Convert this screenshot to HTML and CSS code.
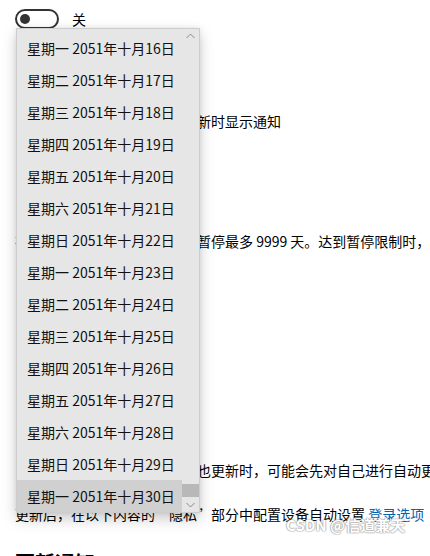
FILE: index.html
```html
<!DOCTYPE html>
<html lang="zh-CN">
<head>
    <meta charset="UTF-8">
    <meta name="viewport" content="width=device-width, initial-scale=1.0">
    <title>更新设置</title>
    <link rel="stylesheet" href="styles.css">
</head>
<body>
    <div class="page">
        <div class="toggle-row">
            <span class="toggle"><span class="knob"></span></span>
            <span>关</span>
        </div>

        <p class="line line-notify">当电脑需要重新启动以完成更新时显示通知</p>
        <p class="line line-pause">在此设备上暂停安装更新。可暂停最多 9999 天。达到暂停限制时，需要先获取新的更新</p>
        <p class="line line-other">当更新服务在为其他产品同时也更新时，可能会先对自己进行自动更新</p>
        <p class="line line-privacy">更新后，在以下内容的“隐私”部分中配置设备自动设置 <a href="#">登录选项</a></p>
        <h2 class="heading">更新通知</h2>
    </div>

    <div class="dropdown">
        <ul class="items">
            <li>星期一 2051年十月16日</li>
            <li>星期二 2051年十月17日</li>
            <li>星期三 2051年十月18日</li>
            <li>星期四 2051年十月19日</li>
            <li>星期五 2051年十月20日</li>
            <li>星期六 2051年十月21日</li>
            <li>星期日 2051年十月22日</li>
            <li>星期一 2051年十月23日</li>
            <li>星期二 2051年十月24日</li>
            <li>星期三 2051年十月25日</li>
            <li>星期四 2051年十月26日</li>
            <li>星期五 2051年十月27日</li>
            <li>星期六 2051年十月28日</li>
            <li>星期日 2051年十月29日</li>
            <li class="selected">星期一 2051年十月30日</li>
        </ul>
        <div class="scrollbar">
            <span class="arrow">
                <svg width="9" height="6" viewBox="0 0 9 6"><polyline points="0.5,5 4.5,1 8.5,5" fill="none" stroke="#8a8a8a" stroke-width="1"/></svg>
            </span>
            <span class="track"></span>
            <span class="thumb"></span>
            <span class="arrow">
                <svg width="9" height="6" viewBox="0 0 9 6"><polyline points="0.5,1 4.5,5 8.5,1" fill="none" stroke="#8a8a8a" stroke-width="1"/></svg>
            </span>
        </div>
    </div>

    <div class="watermark">CSDN @信道兼天</div>
</body>
</html>
```

FILE: styles.css
```css
body {
    margin: 0;
    width: 430px;
    height: 556px;
    overflow: hidden;
    background: #fff;
    color: #000;
    font-family: "Noto Sans CJK SC", "Microsoft YaHei", sans-serif;
    font-size: 14px;
    position: relative;
}

.page {
    padding-left: 15px;
    white-space: nowrap;
}

.toggle-row {
    display: flex;
    align-items: center;
    gap: 13px;
    height: 20px;
    margin-top: 9px;
    line-height: 20px;
}

.toggle {
    box-sizing: border-box;
    width: 44px;
    height: 20px;
    border: 2px solid #333;
    border-radius: 10px;
    display: flex;
    align-items: center;
    padding-left: 3px;
}

.knob {
    width: 10px;
    height: 10px;
    border-radius: 50%;
    background: #333;
}

.line {
    margin: 0;
    line-height: 20px;
}

.line-notify { margin-top: 82px; }
.line-pause { margin-top: 100px; }
.line-other { margin-top: 209px; }
.line-privacy { margin-top: 24px; }

.line a {
    color: #0063b1;
    text-decoration: none;
}

.heading {
    margin: 25px 0 0;
    font-size: 20px;
    font-weight: 600;
    line-height: 28px;
}

/* open combo box popup */
.dropdown {
    position: absolute;
    left: 16px;
    top: 28px;
    width: 184px;
    box-sizing: border-box;
    border: 1px solid #cdcdcd;
    background: #e6e6e6;
    display: flex;
    box-shadow: 0 6px 14px rgba(0, 0, 0, 0.2), 0 0 5px rgba(0, 0, 0, 0.08);
}

.items {
    list-style: none;
    margin: 0;
    padding: 3px 0 0;
    flex: 1;
}

.items li {
    height: 32px;
    line-height: 32px;
    padding-left: 10px;
    color: #111;
}

.items li.selected {
    background: #d0d0d0;
}

.scrollbar {
    width: 17px;
    display: flex;
    flex-direction: column;
}

.arrow {
    height: 14px;
    display: flex;
    align-items: center;
    justify-content: center;
}

.track {
    flex: 1;
}

.thumb {
    height: 13px;
    margin-bottom: 1px;
    background: #b8b8b8;
}

.watermark {
    position: absolute;
    left: 286px;
    top: 514px;
    font-size: 15px;
    font-weight: 700;
    color: #fff;
    text-shadow: 0 0 1px #999, 0 0 1px #999, 0 0 2px #aaa;
    white-space: nowrap;
}
```
